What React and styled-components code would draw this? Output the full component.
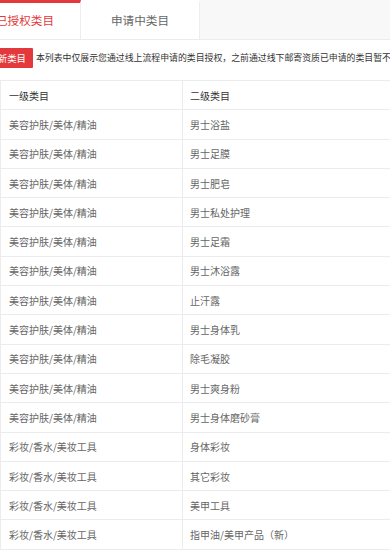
import React from 'react';
import styled, { createGlobalStyle } from 'styled-components';

const GlobalStyle = createGlobalStyle`
  html, body {
    margin: 0;
    padding: 0;
    background: #fff;
    overflow: hidden;
  }
  body {
    font-family: "Noto Sans CJK SC", "Noto Sans", sans-serif;
  }
`;

// la captura está recortada por la izquierda
const Page = styled.div`
  width: 560px;
  margin-left: -30px;
`;

const TabBar = styled.div`
  display: flex;
  height: 40px;
  background: #f8f8f8;
  border-bottom: 1px solid #ececec;
  box-sizing: border-box;
`;

const Tab = styled.div`
  width: ${(p) => p.$width}px;
  display: flex;
  align-items: center;
  justify-content: center;
  box-sizing: border-box;
  background: #fff;
  border-right: 1px solid #ededed;
  border-top: 3px solid ${(p) => (p.$active ? '#e4393c' : '#fff')};
  padding-bottom: 2px;
  font-size: 11.6px;
  color: ${(p) => (p.$active ? '#e4393c' : '#666')};
`;

const Notice = styled.div`
  display: flex;
  align-items: center;
  gap: 3px;
  height: 40px;
  padding-bottom: 5px;
  box-sizing: border-box;
`;

const AddButton = styled.div`
  height: 20px;
  width: 63px;
  display: flex;
  align-items: center;
  justify-content: flex-end;
  padding-right: 7px;
  box-sizing: border-box;
  background: #e4393c;
  color: #fff;
  font-size: 9.4px;
  border-radius: 1px;
`;

const NoticeText = styled.span`
  font-size: 8.9px;
  color: #333;
  white-space: nowrap;
`;

const Table = styled.div`
  margin-left: 30px;
  border-top: 1px solid #ececec;
  border-left: 1px solid #ececec;
  width: 530px;
`;

const Row = styled.div`
  display: flex;
  height: 29.3px;
  box-sizing: border-box;
  border-bottom: 1px solid #ececec;
`;

const Cell = styled.div`
  width: ${(p) => (p.$first ? '182px' : 'auto')};
  flex: ${(p) => (p.$first ? 'none' : '1')};
  display: flex;
  align-items: center;
  box-sizing: border-box;
  padding-left: ${(p) => (p.$first ? '8px' : '7px')};
  border-right: ${(p) => (p.$first ? '1px solid #ececec' : 'none')};
  font-size: 10px;
  color: ${(p) => (p.$head ? '#333' : '#666')};
  white-space: nowrap;
`;

const rows = [
  ['美容护肤/美体/精油', '男士浴盐'],
  ['美容护肤/美体/精油', '男士足膜'],
  ['美容护肤/美体/精油', '男士肥皂'],
  ['美容护肤/美体/精油', '男士私处护理'],
  ['美容护肤/美体/精油', '男士足霜'],
  ['美容护肤/美体/精油', '男士沐浴露'],
  ['美容护肤/美体/精油', '止汗露'],
  ['美容护肤/美体/精油', '男士身体乳'],
  ['美容护肤/美体/精油', '除毛凝胶'],
  ['美容护肤/美体/精油', '男士爽身粉'],
  ['美容护肤/美体/精油', '男士身体磨砂膏'],
  ['彩妆/香水/美妆工具', '身体彩妆'],
  ['彩妆/香水/美妆工具', '其它彩妆'],
  ['彩妆/香水/美妆工具', '美甲工具'],
  ['彩妆/香水/美妆工具', '指甲油/美甲产品（新）'],
];

const App = () => {
  return (
    <Page>
      <GlobalStyle />
      <TabBar>
        <Tab $active $width={111}>已授权类目</Tab>
        <Tab $width={119}>申请中类目</Tab>
      </TabBar>

      <Notice>
        <AddButton>添加新类目</AddButton>
        <NoticeText>
          本列表中仅展示您通过线上流程申请的类目授权，之前通过线下邮寄资质已申请的类目暂不显示
        </NoticeText>
      </Notice>

      <Table>
        <Row>
          <Cell $first $head>一级类目</Cell>
          <Cell $head>二级类目</Cell>
        </Row>
        {rows.map(([a, b], i) => (
          <Row key={i}>
            <Cell $first>{a}</Cell>
            <Cell>{b}</Cell>
          </Row>
        ))}
      </Table>
    </Page>
  );
};

export default App;
